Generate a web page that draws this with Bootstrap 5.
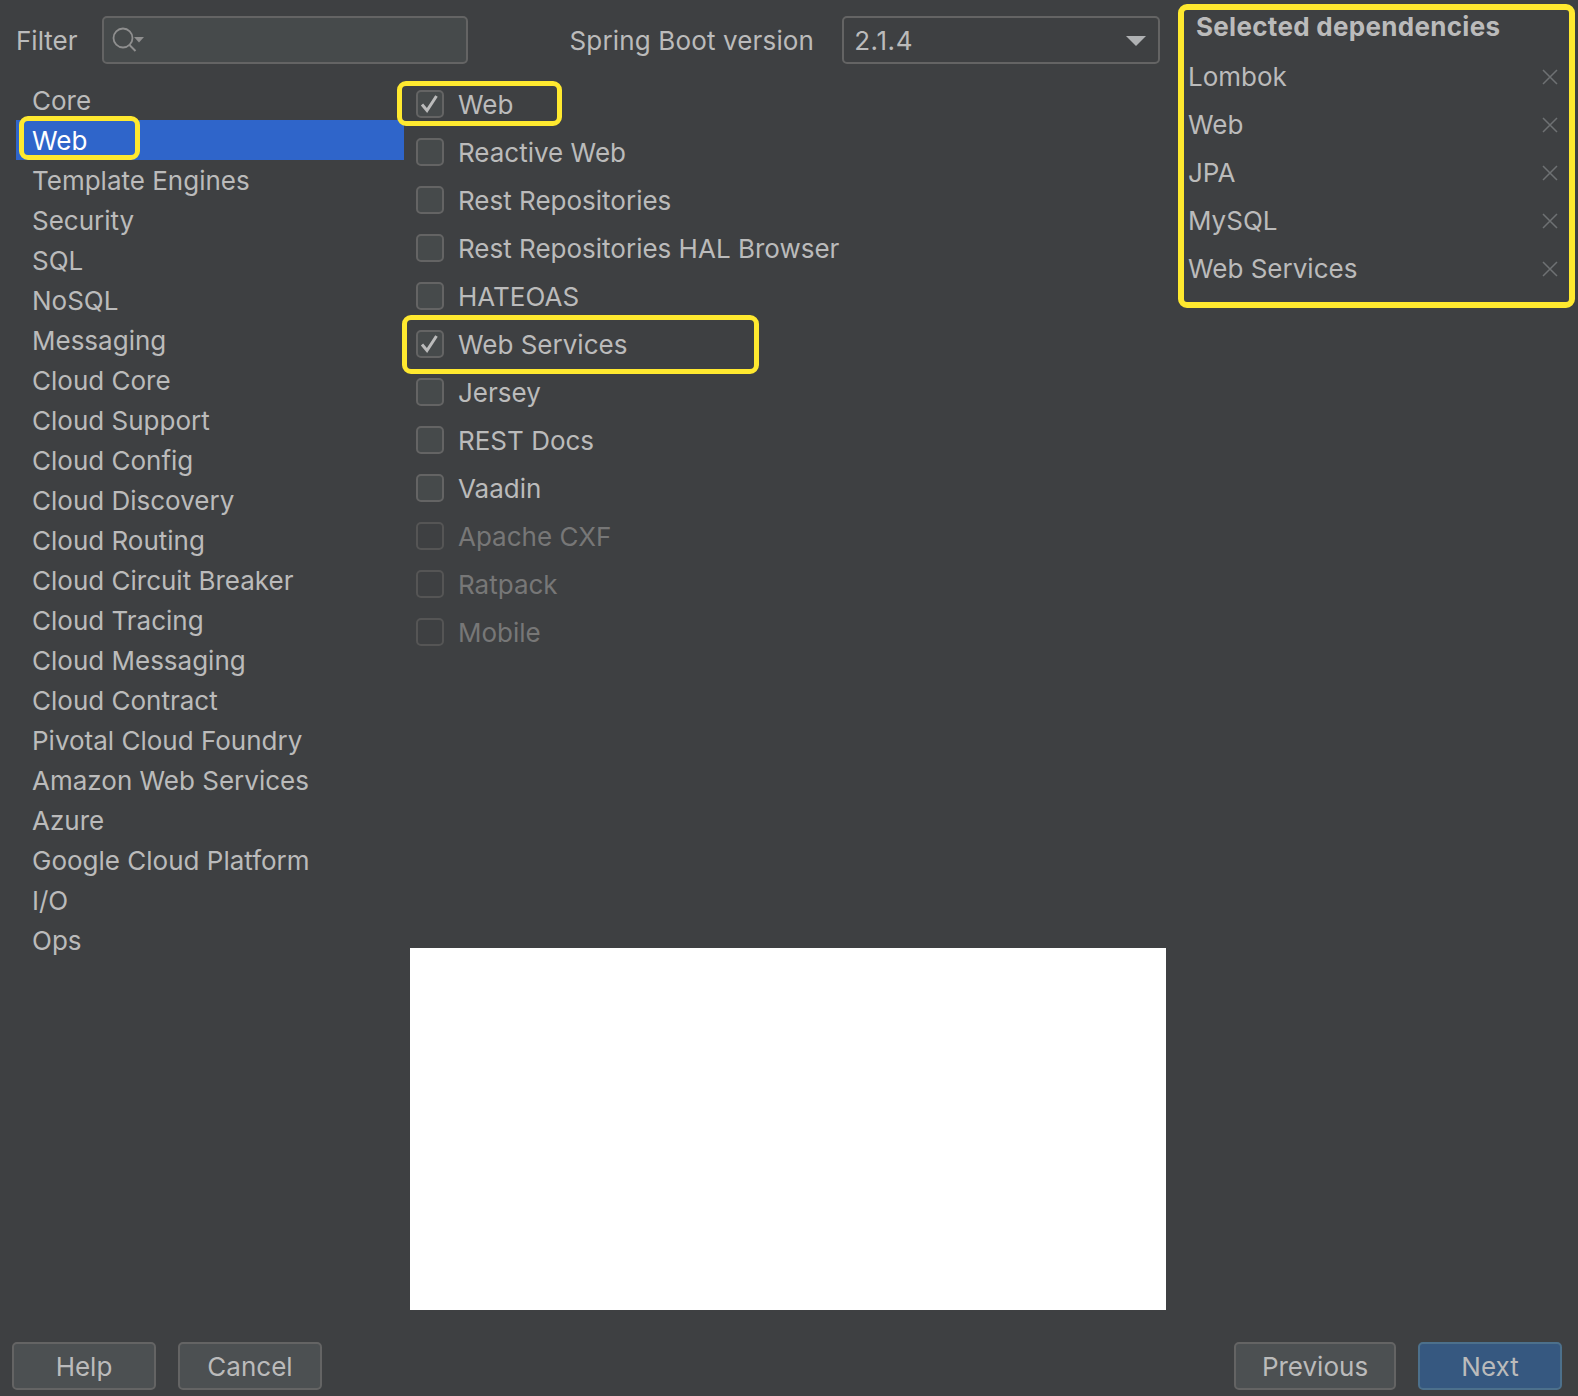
<!DOCTYPE html>
<html lang="en"><head><meta charset="utf-8"><title>Spring Initializr</title>
<link href="https://cdn.jsdelivr.net/npm/bootstrap@5.3.0/dist/css/bootstrap.min.css" rel="stylesheet">
<style>
html,body{height:100%;background:#3e4042}
body{font-family:"Inter","Liberation Sans",sans-serif;font-size:26px;line-height:32px;color:#bbb;overflow:hidden}
.shell{width:1578px;height:1396px}
.upper{height:1342px}
.mainpane{width:1178px;flex:none}
.hdr{height:80px;padding:16px 0 0 16px}
.hdr-text{height:48px;padding-top:2px}
.field{height:48px;border:2px solid #646464;border-radius:5px}
.field-filter{width:366px;margin-left:24px;background:#464a4b;padding-left:8px}
.sb-label{margin-left:102px;margin-right:28px;letter-spacing:.15px}
.field-combo{width:318px;padding:2px 12px 0 10px;letter-spacing:.6px}
.catlist{width:404px;padding-left:16px;padding-top:1px}
.catitem{height:40px;padding-left:16px;position:relative;line-height:40px;white-space:nowrap}
.catitem.sel{background:#2f65ca;color:#fff;margin:-1px 0 1px;line-height:42px}
.centre{padding-left:12px}
.dep{height:48px;gap:14px;position:relative;padding-top:2px}
.dep>.box{margin-top:-2px}
.box{width:28px;height:28px;border:2px solid #646464;border-radius:5px;background:#464a4b;flex:none}
.dep.off{color:#777}
.dep.off .box{background:transparent;border-color:#555}
.blank{width:756px;height:362px;background:#fff;margin:292px 0 0 -6px}
.selpane{width:397px;height:304px;margin-top:4px;border:6px solid #ffe92f;border-radius:9px;padding:0 11px 0 4px}
.selhead{font-weight:700;font-size:26px;color:#bbb;padding-left:8px;height:43px;line-height:34px;white-space:nowrap;letter-spacing:.3px}
.selitem{height:48px}
.hl{position:absolute;border:5px solid #ffe92f;border-radius:9px;pointer-events:none}
.hl-cat{left:3px;top:-4px;width:121px;height:44px}
.hl-web{left:-19px;top:1px;width:165px;height:45px}
.hl-ws{left:-14px;top:-5px;width:357px;height:59px}
.btnx{height:48px;border:2px solid #646464;border-radius:5px;background:#4c5052;color:#bbb;font-size:26px;line-height:1;padding:2px 0 0}
.btnx.primary{background:#365880;border-color:#4c708c}
.w144{width:144px}.w162{width:162px}
.footbar{height:54px;padding:0 16px 0 12px}
.gap22{gap:22px}
</style></head><body>
<div class="shell d-flex flex-column">
<div class="upper d-flex">
 <div class="mainpane">
  <div class="hdr d-flex align-items-start">
   <span class="hdr-text d-flex align-items-center">Filter</span>
   <div class="field field-filter d-flex align-items-center">
    <svg width="34" height="28" viewBox="0 0 34 28" fill="none"><circle cx="11" cy="12" r="9.500" stroke="#8f8f8f" stroke-width="1.800"/><path d="M17.500 19l6 6" stroke="#8f8f8f" stroke-width="2"/><path d="M22 11h10l-5 5.500z" fill="#8f8f8f"/></svg>
   </div>
   <span class="sb-label hdr-text d-flex align-items-center">Spring Boot version</span>
   <div class="field field-combo d-flex align-items-center justify-content-between">
    <span>2.1.4</span>
    <svg width="20" height="12" viewBox="0 0 20 12"><path d="M0 1h20L10 11z" fill="#afb1b3"/></svg>
   </div>
  </div>
  <div class="d-flex">
   <div class="catlist">
    <div class="catitem">Core</div>
    <div class="catitem sel">Web<span class="hl hl-cat"></span></div>
    <div class="catitem">Template Engines</div>
    <div class="catitem">Security</div>
    <div class="catitem">SQL</div>
    <div class="catitem">NoSQL</div>
    <div class="catitem">Messaging</div>
    <div class="catitem">Cloud Core</div>
    <div class="catitem">Cloud Support</div>
    <div class="catitem">Cloud Config</div>
    <div class="catitem">Cloud Discovery</div>
    <div class="catitem">Cloud Routing</div>
    <div class="catitem">Cloud Circuit Breaker</div>
    <div class="catitem">Cloud Tracing</div>
    <div class="catitem">Cloud Messaging</div>
    <div class="catitem">Cloud Contract</div>
    <div class="catitem">Pivotal Cloud Foundry</div>
    <div class="catitem">Amazon Web Services</div>
    <div class="catitem">Azure</div>
    <div class="catitem">Google Cloud Platform</div>
    <div class="catitem">I/O</div>
    <div class="catitem">Ops</div>
   </div>
   <div class="centre">
    <div class="dep d-flex align-items-center"><span class="box d-flex align-items-center justify-content-center"><svg width="22" height="22" viewBox="0 0 22 22" fill="none"><path d="M3 11.500l5 6L17.500 3" stroke="#bbb" stroke-width="3"/></svg></span><span>Web</span><span class="hl hl-web"></span></div>
    <div class="dep d-flex align-items-center"><span class="box"></span><span>Reactive Web</span></div>
    <div class="dep d-flex align-items-center"><span class="box"></span><span>Rest Repositories</span></div>
    <div class="dep d-flex align-items-center"><span class="box"></span><span>Rest Repositories HAL Browser</span></div>
    <div class="dep d-flex align-items-center"><span class="box"></span><span>HATEOAS</span></div>
    <div class="dep d-flex align-items-center"><span class="box d-flex align-items-center justify-content-center"><svg width="22" height="22" viewBox="0 0 22 22" fill="none"><path d="M3 11.500l5 6L17.500 3" stroke="#bbb" stroke-width="3"/></svg></span><span>Web Services</span><span class="hl hl-ws"></span></div>
    <div class="dep d-flex align-items-center"><span class="box"></span><span>Jersey</span></div>
    <div class="dep d-flex align-items-center"><span class="box"></span><span>REST Docs</span></div>
    <div class="dep d-flex align-items-center"><span class="box"></span><span>Vaadin</span></div>
    <div class="dep off d-flex align-items-center"><span class="box"></span><span>Apache CXF</span></div>
    <div class="dep off d-flex align-items-center"><span class="box"></span><span>Ratpack</span></div>
    <div class="dep off d-flex align-items-center"><span class="box"></span><span>Mobile</span></div>
    <div class="blank"></div>
   </div>
  </div>
 </div>
 <div class="selpane">
  <div class="selhead">Selected dependencies</div>
  <div class="selitem d-flex align-items-center justify-content-between"><span>Lombok</span><svg width="16" height="16" viewBox="0 0 16 16"><path d="M1 1l14 14M15 1L1 15" stroke="#6e7173" stroke-width="1.500"/></svg></div>
  <div class="selitem d-flex align-items-center justify-content-between"><span>Web</span><svg width="16" height="16" viewBox="0 0 16 16"><path d="M1 1l14 14M15 1L1 15" stroke="#6e7173" stroke-width="1.500"/></svg></div>
  <div class="selitem d-flex align-items-center justify-content-between"><span>JPA</span><svg width="16" height="16" viewBox="0 0 16 16"><path d="M1 1l14 14M15 1L1 15" stroke="#6e7173" stroke-width="1.500"/></svg></div>
  <div class="selitem d-flex align-items-center justify-content-between"><span>MySQL</span><svg width="16" height="16" viewBox="0 0 16 16"><path d="M1 1l14 14M15 1L1 15" stroke="#6e7173" stroke-width="1.500"/></svg></div>
  <div class="selitem d-flex align-items-center justify-content-between"><span>Web Services</span><svg width="16" height="16" viewBox="0 0 16 16"><path d="M1 1l14 14M15 1L1 15" stroke="#6e7173" stroke-width="1.500"/></svg></div>
 </div>
</div>
<div class="footbar d-flex justify-content-between align-items-start">
 <div class="d-flex gap22"><button class="btnx w144">Help</button><button class="btnx w144">Cancel</button></div>
 <div class="d-flex gap22"><button class="btnx w162">Previous</button><button class="btnx w144 primary">Next</button></div>
</div>
</div>
</body></html>
